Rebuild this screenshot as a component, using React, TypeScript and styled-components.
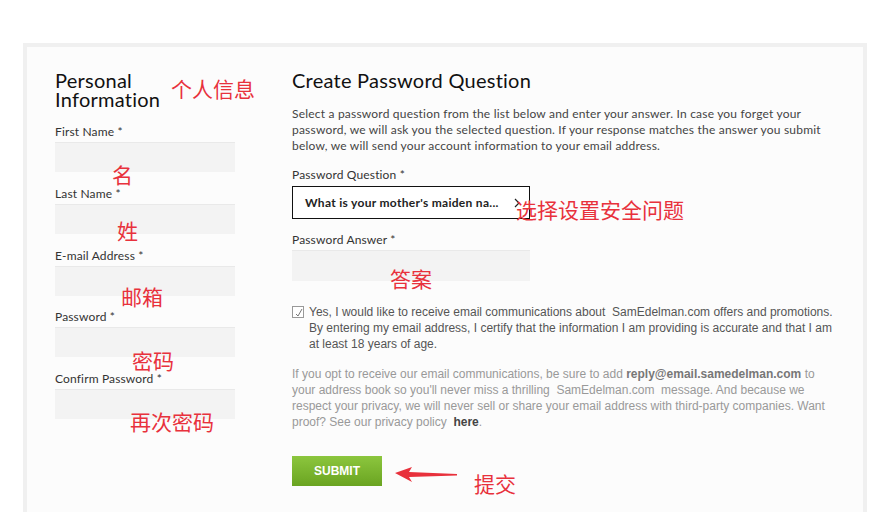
import styled, { createGlobalStyle } from "styled-components";

const GlobalStyle = createGlobalStyle`
  body {
    margin: 0;
    background: #ffffff;
    overflow: hidden;
  }
  * { box-sizing: border-box; }
`;

const Page = styled.div`
  position: relative;
  width: 885px;
  height: 512px;
  padding: 43px 0 0 23px;
  font-family: Lato, "Open Sans", sans-serif;
`;

const Card = styled.div`
  width: 844px;
  height: 520px;
  border: 4px solid #f0f0f0;
  background: #fcfcfc;
  padding: 24px 0 0 28px;
  display: grid;
  grid-template-columns: 180px 548px;
  column-gap: 57px;
  align-items: start;
`;

const Column = styled.div`
  display: flex;
  flex-direction: column;
`;

const Heading = styled.h2`
  margin: 0;
  font-size: 20px;
  line-height: 19px;
  font-weight: 400;
  letter-spacing: 0.25px;
  color: #111;
`;

const Fields = styled.div`
  display: flex;
  flex-direction: column;
  gap: 13.75px;
  margin-top: 15px;
`;

const Field = styled.div`
  display: flex;
  flex-direction: column;
  gap: 2px;
`;

const Label = styled.label<{ $gap?: number }>`
  display: block;
  font-size: 12px;
  line-height: 16px;
  letter-spacing: 0.15px;
  color: #333;
  margin-top: ${(p) => p.$gap ?? 0}px;
`;

const TextInput = styled.div<{ $width: number; $height: number }>`
  width: ${(p) => p.$width}px;
  height: ${(p) => p.$height}px;
  background: #f3f3f3;
  border-top: 1px solid #e9e9e9;
`;

const Intro = styled.p`
  margin: 16px 0 0;
  font-size: 12px;
  line-height: 16px;
  letter-spacing: 0.2px;
  color: #444;
`;

const SelectBox = styled.div`
  margin-top: 3px;
  width: 238px;
  height: 33px;
  border: 1px solid #111;
  background: #fff;
  display: flex;
  align-items: center;
  justify-content: space-between;
  padding: 0 9px 0 12px;
  font-size: 12px;
  font-weight: 700;
  letter-spacing: 0.3px;
  color: #222;
`;

const CheckRow = styled.div`
  margin-top: 23px;
  display: flex;
  align-items: flex-start;
  gap: 5px;
  font-family: "Liberation Sans", Arial, sans-serif;
  font-size: 12px;
  line-height: 16px;
  color: #555;
`;

const CheckIcon = styled.svg`
  flex: none;
  margin-top: 2px;
`;

const Promo = styled.p`
  margin: 14px 0 0;
  font-family: "Liberation Sans", Arial, sans-serif;
  font-size: 12px;
  line-height: 16px;
  color: #999;

  b {
    color: #777;
  }
  a {
    color: #444;
    font-weight: 700;
    text-decoration: none;
  }
`;

const SubmitButton = styled.button`
  margin-top: 26px;
  width: 90px;
  height: 30px;
  border: none;
  background: linear-gradient(#8cc63e, #6aa421);
  color: #fff;
  font-family: "Liberation Sans", Arial, sans-serif;
  font-weight: 700;
  font-size: 12px;
  padding: 0;
`;

const Note = styled.span<{ $x: number; $y: number }>`
  position: absolute;
  left: ${(p) => p.$x}px;
  top: ${(p) => p.$y}px;
  font-family: "Noto Sans CJK SC", sans-serif;
  font-size: 21px;
  line-height: 1;
  color: #e8313c;
  white-space: nowrap;
`;

const Arrow = styled.svg`
  position: absolute;
  left: 394px;
  top: 465px;
`;

const leftFields = [
  "First Name *",
  "Last Name *",
  "E-mail Address *",
  "Password *",
  "Confirm Password *",
];

const notes = [
  { text: "个人信息", x: 171, y: 78 },
  { text: "名", x: 112, y: 164 },
  { text: "姓", x: 117, y: 220 },
  { text: "邮箱", x: 121, y: 286 },
  { text: "密码", x: 132, y: 350 },
  { text: "再次密码", x: 130, y: 411 },
  { text: "选择设置安全问题", x: 516, y: 199 },
  { text: "答案", x: 390, y: 268 },
  { text: "提交", x: 474, y: 473 },
];

const App = (): JSX.Element => {
  return (
    <Page>
      <GlobalStyle />
      <Card>
        <Column>
          <Heading>
            Personal
            <br />
            Information
          </Heading>
          <Fields>
            {leftFields.map((name) => (
              <Field key={name}>
                <Label>{name}</Label>
                <TextInput $width={180} $height={30} />
              </Field>
            ))}
          </Fields>
        </Column>

        <Column>
          <Heading>Create Password Question</Heading>
          <Intro>
            Select a password question from the list below and enter your answer. In case you forget your
            <br />
            password, we will ask you the selected question. If your response matches the answer you submit
            <br />
            below, we will send your account information to your email address.
          </Intro>
          <Label $gap={13}>Password Question *</Label>
          <SelectBox>
            <span>What is your mother's maiden na...</span>
            <svg width="6" height="10" viewBox="0 0 6 10">
              <polyline points="1,1 5,5 1,9" fill="none" stroke="#222" strokeWidth="1.2" />
            </svg>
          </SelectBox>
          <Label $gap={13}>Password Answer *</Label>
          <TextInput $width={238} $height={31} style={{ marginTop: 2 }} />
          <CheckRow>
            <CheckIcon width="12" height="12" viewBox="0 0 12 12">
              <rect x="0.5" y="0.5" width="11" height="11" fill="#fff" stroke="#999" />
              <polyline points="4,8 6,10 10,3" fill="none" stroke="#777" strokeWidth="1" />
            </CheckIcon>
            <span>
              Yes, I would like to receive email communications about &nbsp;SamEdelman.com offers and promotions.
              By entering my email address, I certify that the information I am providing is accurate and that I am
              at least 18 years of age.
            </span>
          </CheckRow>
          <Promo>
            If you opt to receive our email communications, be sure to add <b>reply@email.samedelman.com</b> to
            <br />
            your address book so you'll never miss a thrilling &nbsp;SamEdelman.com &nbsp;message. And because we
            <br />
            respect your privacy, we will never sell or share your email address with third-party companies. Want
            <br />
            proof? See our privacy policy &nbsp;<a href="#">here</a>.
          </Promo>
          <SubmitButton>SUBMIT</SubmitButton>
        </Column>
      </Card>

      {notes.map((n) => (
        <Note key={n.text} $x={n.x} $y={n.y}>
          {n.text}
        </Note>
      ))}
      <Arrow width="66" height="20" viewBox="0 0 66 20">
        <path d="M1 8 L18 2 L15 7 L63 9 L63 10.5 L15 12 L18 17 Z" fill="#e8313c" />
      </Arrow>
    </Page>
  );
};

export default App;
